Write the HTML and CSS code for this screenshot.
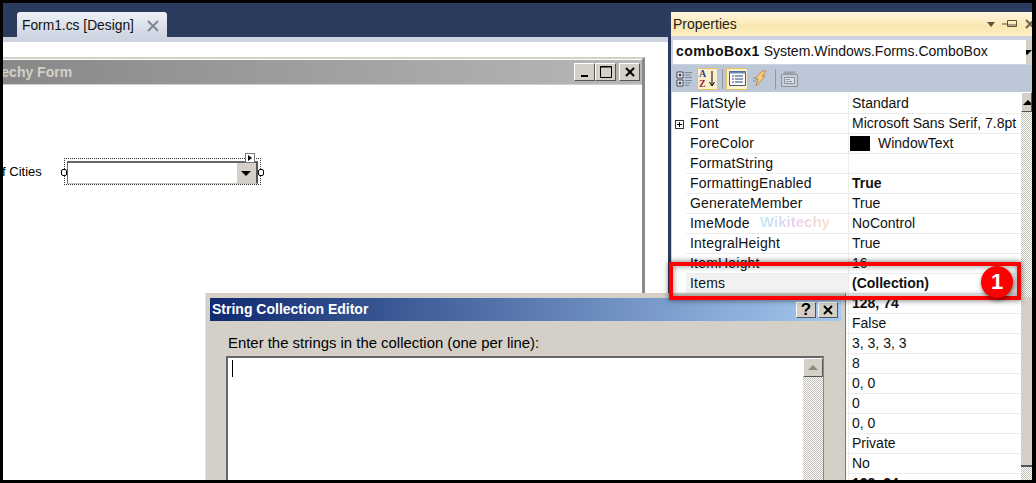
FILE: index.html
```html
<!DOCTYPE html>
<html lang="en">
<head>
  <meta charset="UTF-8" />
  <title>String Collection Editor</title>
  <link rel="stylesheet" href="styles.css">
</head>
<body>

<div class="screen">

  <div class="doc">
    <div class="tabstrip">
      <div class="tab">
        <span>Form1.cs [Design]</span>
        <svg class="tab-close" width="12" height="12" viewBox="0 0 12 12"><path d="M1 1 L11 11 M11 1 L1 11" stroke="#7d8797" stroke-width="2"/></svg>
      </div>
    </div>
    <div class="tabband"></div>
    <div class="designer">
      <div class="form">
        <div class="form-title">
          <span>Wikitechy Form</span>
          <div class="form-btns">
            <button class="win-btn"><svg width="12" height="12" viewBox="0 0 12 12"><path d="M2 10 H9" stroke="#000" stroke-width="2"/></svg></button>
            <button class="win-btn"><svg width="14" height="14" viewBox="0 0 14 14"><path d="M1.5 1.5 H12.5 V12.5 H1.5 Z M1 2 H13" stroke="#000" fill="none"/></svg></button>
            <button class="win-btn win-btn-close"><svg width="12" height="12" viewBox="0 0 12 12"><path d="M2 2 L10 10 M10 2 L2 10" stroke="#000" stroke-width="2"/></svg></button>
          </div>
        </div>
        <div class="form-body">
          <label class="form-label">List of Cities</label>
          <div class="combo-select">
            <div class="combo">
              <div class="combo-btn"><i class="arrow-down"></i></div>
            </div>
            <i class="handle handle-l"></i>
            <i class="handle handle-r"></i>
            <i class="smart-tag"></i>
          </div>
        </div>
      </div>
    </div>
  </div>

  <div class="props">
    <div class="props-title">
      <span>Properties</span>
      <div class="props-title-icons">
        <i class="title-arrow"></i>
        <svg width="16" height="10" viewBox="0 0 16 10"><path d="M0 5 H5 M5.5 1.5 H14.5 V7.5 H5.5 Z M5.5 6 H14.5" stroke="#5a5340" fill="none"/></svg>
        <svg width="10" height="10" viewBox="0 0 10 10"><path d="M1 1 L9 9 M9 1 L1 9" stroke="#6b6552" stroke-width="2"/></svg>
      </div>
    </div>
    <div class="objbox">
      <b>comboBox1</b>&nbsp;<span>System.Windows.Forms.ComboBox</span>
      <div class="objbox-btn"><i class="arrow-down"></i></div>
    </div>
    <div class="toolbar">
      <svg class="tool" width="18" height="20" viewBox="0 0 18 20">
        <path d="M1 3 H7 V9 H1 Z M1 11 H7 V17 H1 Z" fill="#fff" stroke="#3c4454"/>
        <path d="M2.5 6 H5.5 M4 4.5 V7.5 M2.5 14 H5.5 M4 12.5 V15.5" stroke="#000"/>
        <path d="M9 3.5 H16 M9 6 H15 M9 8.5 H16 M9 11.5 H16 M9 14 H15 M9 16.5 H13" stroke="#7f8a8a"/>
      </svg>
      <div class="tool-on tool-az">
        <svg width="19" height="19" viewBox="0 0 19 19">
          <text x="1" y="8" class="az az-a">A</text>
          <text x="1" y="18" class="az az-z">Z</text>
          <path d="M14 2 V16 M11.5 13 L14 17 L16.5 13" stroke="#000" fill="none"/>
        </svg>
      </div>
      <i class="tool-sep"></i>
      <div class="tool-on">
        <svg width="17" height="15" viewBox="0 0 17 15">
          <path d="M0.5 0.5 H16.5 V14.5 H0.5 Z" fill="#fff" stroke="#3c5a84"/>
          <path d="M0.5 0.5 H16.5 V2.5 H0.5 Z" fill="#6d88ad"/>
          <path d="M3 5 H5 M3 8 H5 M3 11 H5" stroke="#26406a"/>
          <path d="M6 5 H14 M6 8 H14 M6 11 H14" stroke="#26406a"/>
        </svg>
      </div>
      <svg class="tool tool-bolt" width="14" height="18" viewBox="0 0 14 18">
        <path d="M9 1 L13 1 L9 6 L12 6 L3 16 L5 9 L2 9 Z" fill="#f6cf7a" stroke="#c9772d" stroke-width="0.8"/>
        <path d="M0 8 H4 M0 11 H3" stroke="#8a8f9c"/>
      </svg>
      <i class="tool-sep tool-sep-2"></i>
      <svg class="tool" width="17" height="16" viewBox="0 0 17 16">
        <path d="M0.5 3.5 H16.5 V15.5 H0.5 Z" fill="#c9cfd6" stroke="#8d949c"/>
        <path d="M2.5 0.5 H14.5 V3.5 H2.5 Z" fill="#9aa2aa"/>
        <path d="M3.5 6.5 H13.5 V12.5 H3.5 Z" fill="#dfe3e7" stroke="#8d949c"/>
        <path d="M5 8.5 H9 M5 10.5 H11" stroke="#8d949c"/>
      </svg>
    </div>
    <div class="grid-wrap">
      <div class="grid">
        <div class="row"><span class="gutter"></span><span class="name">FlatStyle</span><span class="value">Standard</span></div>
        <div class="row"><span class="gutter"><i class="expand"></i></span><span class="name">Font</span><span class="value">Microsoft Sans Serif, 7.8pt</span></div>
        <div class="row"><span class="gutter"></span><span class="name">ForeColor</span><span class="value"><i class="swatch"></i>WindowText</span></div>
        <div class="row"><span class="gutter"></span><span class="name">FormatString</span><span class="value"></span></div>
        <div class="row"><span class="gutter"></span><span class="name">FormattingEnabled</span><span class="value"><b>True</b></span></div>
        <div class="row"><span class="gutter"></span><span class="name">GenerateMember</span><span class="value">True</span></div>
        <div class="row"><span class="gutter"></span><span class="name">ImeMode</span><span class="value">NoControl</span></div>
        <div class="row"><span class="gutter"></span><span class="name">IntegralHeight</span><span class="value">True</span></div>
        <div class="row"><span class="gutter"></span><span class="name">ItemHeight</span><span class="value">16</span></div>
        <div class="row row-sel"><span class="gutter"></span><span class="name">Items</span><span class="value"><b>(Collection)</b></span></div>
        <div class="row"><span class="gutter"></span><span class="name">Location</span><span class="value"><b>128, 74</b></span></div>
        <div class="row"><span class="gutter"></span><span class="name">Locked</span><span class="value">False</span></div>
        <div class="row"><span class="gutter"></span><span class="name">Margin</span><span class="value">3, 3, 3, 3</span></div>
        <div class="row"><span class="gutter"></span><span class="name">MaxDropDownItems</span><span class="value">8</span></div>
        <div class="row"><span class="gutter"></span><span class="name">MaximumSize</span><span class="value">0, 0</span></div>
        <div class="row"><span class="gutter"></span><span class="name">MaxLength</span><span class="value">0</span></div>
        <div class="row"><span class="gutter"></span><span class="name">MinimumSize</span><span class="value">0, 0</span></div>
        <div class="row"><span class="gutter"></span><span class="name">Modifiers</span><span class="value">Private</span></div>
        <div class="row"><span class="gutter"></span><span class="name">RightToLeft</span><span class="value">No</span></div>
        <div class="row"><span class="gutter"></span><span class="name">Size</span><span class="value"><b>128, 24</b></span></div>
      </div>
      <div class="vscroll">
        <div class="vscroll-up"><i class="arrow-up"></i></div>
        <div class="vscroll-thumb"></div>
      </div>
    </div>
  </div>

  <div class="watermark">Wikitechy<small>.com</small></div>

  <div class="dialog">
    <div class="dialog-title">
      <span>String Collection Editor</span>
      <div class="dialog-btns">
        <button class="win-btn win-btn-dlg">?</button>
        <button class="win-btn win-btn-dlg"><svg width="12" height="12" viewBox="0 0 12 12"><path d="M2 2 L10 10 M10 2 L2 10" stroke="#000" stroke-width="2"/></svg></button>
      </div>
    </div>
    <div class="dialog-body">
      <p class="dialog-label">Enter the strings in the collection (one per line):</p>
      <div class="editor">
        <i class="caret"></i>
        <div class="editor-scroll">
          <div class="editor-up"><i class="arrow-up arrow-up-grey"></i></div>
        </div>
      </div>
    </div>
  </div>

  <div class="callout"></div>
  <div class="callout-num">1</div>

</div>

</body>
</html>
```

FILE: styles.css
```css
* {
  box-sizing: border-box;
}
body {
  margin: 0;
  font-family: 'Liberation Sans', Arial, sans-serif;
  font-size: 14px;
  color: #111;
}
i {
  display: block;
}
.screen {
  position: relative;
  display: flex;
  width: 1036px;
  height: 483px;
  overflow: hidden;
  background: #2b3c5e;
  border: solid #000;
  border-width: 3px 4px 3px 3px;
}

/* left side, document tab and form */
.doc {
  display: flex;
  flex-direction: column;
  width: 665px;
  flex: none;
}
.tabstrip {
  display: flex;
  align-items: flex-end;
  height: 34px;
  padding-left: 14px;
}
.tab {
  display: flex;
  align-items: center;
  justify-content: space-between;
  width: 150px;
  height: 25px;
  padding: 2px 8px 0 5px;
  background: linear-gradient(#eef1f6, #ced4e1);
  border-radius: 3px 3px 0 0;
  font-size: 13.8px;
}
.tabband {
  height: 5px;
  background: #ced4e1;
}
.designer {
  flex: 1;
  min-height: 0;
  overflow: hidden;
  padding-top: 15px;
  background: #fff;
}
.form {
  width: 742px;
  height: 400px;
  margin-left: -100px;
  background: #fff;
  border-top: 2px solid #d4d0c8;
  border-right: 3px solid #8a8a86;
  padding-top: 1px;
}
.form-title {
  display: flex;
  align-items: center;
  justify-content: space-between;
  height: 25px;
  padding: 0 2px 0 65px;
  background: linear-gradient(90deg, #808080, #b8b8b8);
  color: #d4d0c8;
  font-weight: bold;
  border-bottom: 1px solid #d4d0c8;
}
.form-btns {
  display: flex;
}
.dialog-btns {
  display: flex;
  gap: 2px;
}
.win-btn {
  display: flex;
  align-items: center;
  justify-content: center;
  width: 21px;
  height: 18px;
  padding: 0;
  background: #d4d0c8;
  border: 1px solid;
  border-color: #fff #555 #555 #fff;
}
.win-btn-close {
  margin-left: 3px;
}
.form-body {
  display: flex;
  align-items: center;
  gap: 22px;
  padding: 73px 0 0 68px;
}
.form-label {
  color: #000;
  font-size: 13px;
}
.combo-select {
  position: relative;
  width: 197px;
  height: 27px;
  padding: 2px;
  border: 1px dotted #333;
}
.combo {
  display: flex;
  justify-content: flex-end;
  width: 191px;
  height: 23px;
  background: #fff;
  border: solid;
  border-width: 2px 2px 1px 1px;
  border-color: #666 #555 #c8c4bc #666;
}
.combo-btn {
  display: flex;
  align-items: center;
  justify-content: center;
  width: 19px;
  background: #d4d0c8;
}
.arrow-down {
  width: 0;
  height: 0;
  border: 5px solid transparent;
  border-top-color: #000;
  border-bottom: 0;
}
.arrow-up {
  width: 0;
  height: 0;
  border: 5px solid transparent;
  border-bottom-color: #000;
  border-top: 0;
}
.arrow-up-grey {
  border-bottom-color: #8a8a86;
}
.handle {
  position: absolute;
  top: 10px;
  width: 6px;
  height: 7px;
  background: #fff;
  border: 1px solid #000;
  border-radius: 2px;
}
.handle-l {
  left: -4px;
}
.handle-r {
  right: -4px;
}
.smart-tag {
  position: absolute;
  top: -6px;
  right: 5px;
  width: 10px;
  height: 10px;
  background: #fff;
  border: 1px solid #777;
}
.smart-tag::after {
  content: "";
  display: block;
  width: 0;
  height: 0;
  margin: 1px 0 0 2px;
  border: 3px solid transparent;
  border-left: 4px solid #000;
  border-right: 0;
}

/* properties panel */
.props {
  display: flex;
  flex-direction: column;
  flex: 1;
  min-width: 0;
  margin: 9px 0 0 3px;
  background: #ccd3e0;
  border-radius: 2px 2px 0 0;
}
.props-title {
  display: flex;
  align-items: center;
  justify-content: space-between;
  flex: none;
  height: 24px;
  padding: 0 0 0 2px;
  background: linear-gradient(#fdf6e0, #fbe8b0 60%, #fdeec6);
  color: #222;
}
.props-title-icons {
  display: flex;
  align-items: center;
  gap: 7px;
  margin-right: -3px;
}
.title-arrow {
  width: 0;
  height: 0;
  border: 4px solid transparent;
  border-top: 5px solid #5a5340;
  border-bottom: 0;
}
.objbox {
  position: relative;
  flex: none;
  height: 24px;
  margin: 4px 0 1px 2px;
  padding: 3px 0 0 3px;
  background: #fff;
  white-space: nowrap;
}
.objbox b {
  letter-spacing: 0.4px;
}
.objbox-btn {
  position: absolute;
  top: 0;
  right: 0;
  bottom: 0;
  display: flex;
  align-items: center;
  justify-content: flex-end;
  width: 6px;
  background: #d4d0c8;
  overflow: hidden;
}
.objbox-btn .arrow-down {
  flex: none;
}
.toolbar {
  display: flex;
  align-items: center;
  flex: none;
  height: 27px;
  padding-left: 5px;
  background: #bcc7d8;
}
.tool-on {
  display: flex;
  align-items: center;
  justify-content: center;
  width: 22px;
  height: 22px;
  margin-left: 3px;
  background: #fdf0cf;
  border: 1px solid #e5c365;
}
.tool-az {
  width: 21px;
}
.tool-sep {
  width: 1px;
  height: 20px;
  margin: 0 0 0 4px;
  background: #8d97a8;
}
.tool-bolt {
  margin-left: 5px;
}
.tool-sep-2 {
  margin: 0 5px 0 8px;
}
.az {
  font-family: 'Liberation Serif', serif;
  font-size: 10px;
  font-weight: bold;
}
.az-a {
  fill: #2c3f8f;
}
.az-z {
  fill: #8f2c3a;
}
.grid-wrap {
  display: flex;
  flex: 1;
  min-height: 0;
  margin-left: 1px;
  background: #fff;
}
.grid {
  flex: 1;
  min-width: 0;
  padding-top: 2px;
}
.row {
  display: flex;
  height: 20px;
  line-height: 19px;
}
.gutter {
  display: flex;
  align-items: center;
  justify-content: center;
  width: 14px;
  flex: none;
}
.name {
  width: 163px;
  flex: none;
  padding-left: 4px;
  border-bottom: 1px solid #ececec;
  border-right: 1px solid #ececec;
  letter-spacing: 0.2px;
  white-space: nowrap;
}
.value {
  display: flex;
  align-items: center;
  flex: 1;
  padding-left: 3px;
  border-bottom: 1px solid #ececec;
  white-space: nowrap;
}
.row-sel .name {
  background: #f2f2f2;
}
.expand {
  position: relative;
  width: 9px;
  height: 9px;
  border: 1px solid #333;
  background: linear-gradient(#000, #000) center/5px 1px no-repeat, linear-gradient(#000, #000) center/1px 5px no-repeat;
}
.swatch {
  width: 20px;
  height: 15px;
  margin: 0 8px 0 -2px;
  background: #000;
}
.vscroll {
  display: flex;
  flex-direction: column;
  width: 11px;
  flex: none;
  background: repeating-conic-gradient(#c4c0b8 0 25%, #fff 0 50%) 0 0/2px 2px;
}
.vscroll-up {
  display: flex;
  align-items: center;
  justify-content: flex-start;
  height: 20px;
  padding-left: 1px;
  background: #d4d0c8;
  border: 1px solid;
  border-color: #fff #555 #555 #fff;
  overflow: hidden;
}
.vscroll-thumb {
  width: 11px;
  height: 170px;
  margin-top: 185px;
  background: #d4d0c8;
  border-bottom: 2px solid #555;
}
.watermark {
  position: absolute;
  left: 757px;
  top: 209px;
  font-size: 15px;
  font-weight: bold;
  line-height: 20px;
  background: linear-gradient(90deg, #bfeaf9, #ecd0f4, #fadfc8);
  -webkit-background-clip: text;
  background-clip: text;
  color: transparent;
}
.watermark small {
  position: absolute;
  right: 8px;
  top: 12px;
  font-size: 7px;
}

/* floating string editor */
.dialog {
  position: absolute;
  left: 202px;
  top: 290px;
  width: 641px;
  height: 200px;
  padding: 4px 4px 0 4px;
  background: #d4d0c8;
  border: solid;
  border-width: 1px 1px 0 1px;
  border-color: #d4d0c8 #777 #777 #e8e6e0;
}
.dialog-title {
  display: flex;
  align-items: center;
  justify-content: space-between;
  height: 23px;
  padding: 0 3px 2px 2px;
  background: linear-gradient(90deg, #0f2a70, #a6caf0);
  color: #fff;
  font-weight: bold;
}
.win-btn-dlg {
  width: 20px;
  height: 16px;
  margin-top: 2px;
  font: bold 17px 'Liberation Sans', sans-serif;
  color: #000;
}
.dialog-body {
  padding: 14px 16px 0 16px;
}
.dialog-label {
  margin: 0 0 5px;
  padding-left: 2px;
  color: #000;
  font-size: 14.9px;
  line-height: 16px;
}
.editor {
  position: relative;
  width: 598px;
  height: 140px;
  background: #fff;
  border: solid;
  border-width: 2px 1px 0 2px;
  border-color: #666 #888 #666 #666;
}
.caret {
  position: absolute;
  left: 4px;
  top: 2px;
  width: 1px;
  height: 17px;
  background: #000;
}
.editor-scroll {
  position: absolute;
  top: 0;
  right: 0;
  bottom: 0;
  width: 20px;
  background: repeating-conic-gradient(#c4c0b8 0 25%, #fff 0 50%) 0 0/2px 2px;
}
.editor-up {
  display: flex;
  align-items: center;
  justify-content: center;
  height: 19px;
  background: #d4d0c8;
  border: 1px solid;
  border-color: #fff #555 #555 #fff;
}

/* red highlight drawn over the shot */
.callout {
  position: absolute;
  left: 666px;
  top: 259px;
  width: 352px;
  height: 38px;
  border: 4px solid #f00;
  box-shadow: 0 0 6px rgba(0, 0, 0, 0.6), inset 0 0 6px rgba(0, 0, 0, 0.45);
}
.callout-num {
  position: absolute;
  left: 978px;
  top: 263px;
  width: 32px;
  height: 32px;
  border-radius: 50%;
  background: #f00;
  box-shadow: 1px 2px 5px rgba(0, 0, 0, 0.6);
  color: #fff;
  font-size: 22px;
  font-weight: bold;
  line-height: 32px;
  text-align: center;
}
```
